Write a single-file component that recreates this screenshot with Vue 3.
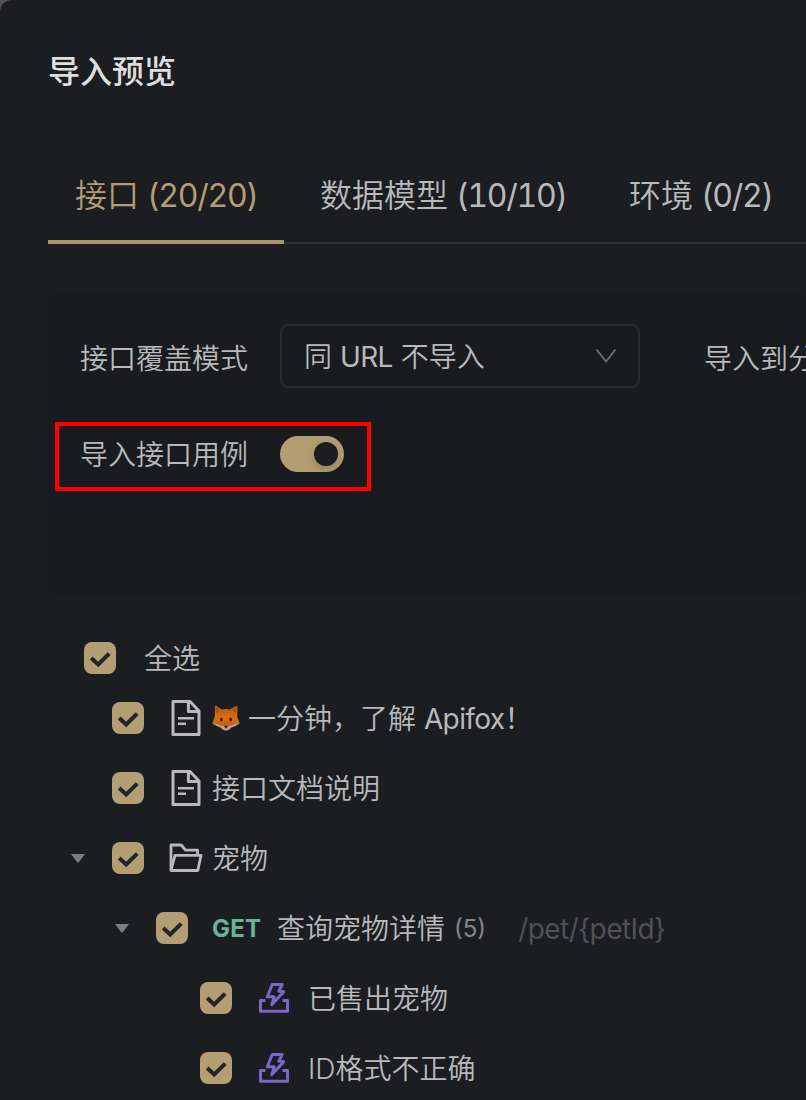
<script setup>
const tabs = [
  { name: '接口', count: '(20/20)', active: true, id: 'api' },
  { name: '数据模型', count: '(10/10)', id: 'model' },
  { name: '环境', count: '(0/2)', id: 'env' },
]
const rows = [
  { level: 1, icon: 'doc', fox: true, text: '一分钟，了解 ', latin: 'Apifox！' },
  { level: 1, icon: 'doc', text: '接口文档说明' },
  { level: 1, icon: 'folder', caret: true, text: '宠物' },
  { level: 2, method: 'GET', caret: true, text: '查询宠物详情', count: '(5)', path: '/pet/{petId}' },
  { level: 3, icon: 'case', text: '已售出宠物' },
  { level: 3, icon: 'case', text: 'ID格式不正确' },
]
</script>

<template>
  <div class="backdrop">
    <main class="modal">
      <h1 class="title">导入预览</h1>

      <nav class="tabs">
        <div v-for="t in tabs" :key="t.id" class="tab" :class="[t.id, { active: t.active }]">
          <span>{{ t.name }}</span><span class="tab-count">{{ t.count }}</span>
        </div>
      </nav>

      <section class="panel">
        <div class="field-row">
          <span class="label">接口覆盖模式</span>
          <div class="select">
            <span class="value">同 <span class="latin">URL</span> 不导入</span>
            <svg class="chevron" width="22" height="16" viewBox="0 0 22 16"><path d="M1.5 1.5 L11 13.5 L20.5 1.5" fill="none" stroke="#6c6d70" stroke-width="2" /></svg>
          </div>
          <span class="label group">导入到分</span>
        </div>
        <div class="highlight">
          <span class="label">导入接口用例</span>
          <div class="switch"><i class="knob"></i></div>
        </div>
      </section>

      <section class="tree">
        <div class="row all">
          <span class="check"><svg width="32" height="32" viewBox="0 0 32 32"><path d="M7.2 16 L14.2 22.4 L25.2 11.6" fill="none" stroke="#242529" stroke-width="4" /></svg></span>
          <span class="text">全选</span>
        </div>
        <div v-for="r in rows" :key="r.text" class="row" :class="'level' + r.level">
          <span class="caret"><svg v-if="r.caret" width="14" height="9" viewBox="0 0 14 9"><path d="M0 0 H14 L8 8 Q7 9 6 8 Z" fill="#7d7e80" /></svg></span>
          <span class="check"><svg width="32" height="32" viewBox="0 0 32 32"><path d="M7.2 16 L14.2 22.4 L25.2 11.6" fill="none" stroke="#242529" stroke-width="4" /></svg></span>

          <svg v-if="r.icon === 'doc'" class="icon doc" width="30" height="36" viewBox="0 0 30 36" fill="none" stroke="#b9b9bb">
            <path d="M2 1.5 H19 L28 11 V34.4 H2 Z M17.4 1.5 V11.5 H27.5" stroke-width="3" stroke-linejoin="round" />
            <path d="M7 18.2 H23 M7 23.7 H15" stroke-width="2.6" />
          </svg>
          <svg v-if="r.icon === 'folder'" class="icon folder" width="34" height="30" viewBox="0 0 34 30" fill="none" stroke="#b9b9bb" stroke-width="2.8" stroke-linejoin="round">
            <path d="M2 27.5 V2 H12.2 L16.5 7.2 H28.5 V12.4 M2 27.5 L6 12.4 H32 L28.8 27.5 Z" />
          </svg>
          <svg v-if="r.icon === 'case'" class="icon case" width="30" height="30" viewBox="0 0 30 30" fill="none" stroke="#7d66c9" stroke-width="3">
            <path d="M6.5 17.4 H1.5 V28.2 H28.5 V17.4 H23.5" stroke-linejoin="round" />
            <path d="M13.2 1.5 H23.3 L19.7 8.2 L24.8 8.7 L12.7 21.8 L15.2 13.8 H8.3 Z" stroke-width="2.9" stroke-linejoin="round" />
          </svg>

          <svg v-if="r.fox" class="fox" width="28" height="26" viewBox="0 0 28 26">
            <defs><linearGradient id="fur" x2="0" y2="1"><stop stop-color="#b95812" /><stop offset=".5" stop-color="#db6e0c" /><stop offset="1" stop-color="#b95412" /></linearGradient></defs>
            <path d="M2.8 1 Q4 0 6 2 L10 4.6 Q14 3.4 18 4.6 L22 2 Q25 0 25.5 2 L25.2 12 Q27 16 27.5 18.6 Q23 21.5 19.5 22.4 Q14 28.4 8.5 22.4 Q5 21.5 .5 18.6 Q1 15 3 11 Z" fill="url(#fur)" />
            <path d="M4 3 L7 5.5 L4.7 8 Z M24.2 3 L21 5.5 L23.5 8 Z" fill="#a04c12" />
            <path d="M.5 18.6 Q5 18 8.5 20.4 Q12 21.5 14 20 Q16 21.5 19.5 20.4 Q23 18 27.5 18.6 Q23 21.5 19.5 22.4 Q14 28.4 8.5 22.4 Q5 21.5 .5 18.6 Z" fill="#b7a08e" />
            <ellipse cx="9.3" cy="14.5" rx="1.3" ry="2.1" fill="#30170d" /><ellipse cx="18.7" cy="14.5" rx="1.3" ry="2.1" fill="#30170d" />
            <path d="M11.8 21 Q14 19.8 16.2 21 L14 23.4 Z" fill="#25211f" />
          </svg>
          <span v-if="r.method" class="method">{{ r.method }}</span>
          <span class="text">{{ r.text }}<span v-if="r.latin" class="latin">{{ r.latin }}</span></span>
          <span v-if="r.count" class="count">{{ r.count }}</span>
          <span v-if="r.path" class="path">{{ r.path }}</span>
        </div>
      </section>
    </main>
  </div>
</template>

<style>
html, body { overflow: hidden; background: #1c1d21; }
</style>

<style scoped>
* { box-sizing: border-box; }
.backdrop { width: 806px; height: 1100px; background: #55534d; overflow: hidden; }
.modal {
  height: 1100px; padding-left: 48px; background: #1c1d21; border-top-left-radius: 12px;
  font-family: Inter, "Noto Sans CJK SC", sans-serif; font-weight: 350; color: #b9b9bb; overflow: hidden; white-space: nowrap;
}
.title { margin: 0; padding-top: 48px; height: 148px; font-size: 32px; line-height: 48px; font-weight: 500; color: #dededf; }
.tabs { display: flex; height: 96px; border-bottom: 2px solid #303135; font-size: 32px; line-height: 95px; }
.tab { display: flex; gap: 8px; flex: none; height: 96px; padding: 0 28px 0 27px; width: 236px; }
.tab.model { width: 309px; padding-left: 36px; }
.tab.env { padding-left: 36px; }
.tab.active { color: #b39d72; border-bottom: 4px solid #a9946c; }
.tab-count { font-variant-numeric: tabular-nums; font-weight: 400; letter-spacing: -1.25px; }
.panel { margin-top: 48px; height: 304px; background: #1a1b1f; border-radius: 12px; padding-top: 32px; width: 758px; }
.field-row { display: flex; align-items: center; height: 64px; padding-left: 32px; }
.label { width: 200px; flex: none; font-size: 28px; line-height: 40px; padding-top: 6px; }
.select { width: 360px; height: 64px; flex: none; border: 2px solid #2a2b2f; border-radius: 8px; display: flex; align-items: center; justify-content: space-between; padding: 0 21px 0 22px; font-size: 28px; }
.value { padding-bottom: 2px; }
.latin { letter-spacing: -.6px; font-weight: 400; }
.group { margin-left: 64px; width: 120px; }
.highlight { margin: 34px 0 0 7px; width: 316px; height: 69px; border: 4px solid #ff0000; display: flex; align-items: center; padding-left: 21px; padding-bottom: 5px; }
.highlight .label { padding-top: 2px; }
.switch { width: 64px; height: 36px; border-radius: 18px; background: #b39d72; padding: 6px; display: flex; justify-content: flex-end; }
.knob { width: 24px; height: 24px; border-radius: 50%; background: #1c1d21; box-shadow: 0 4px 8px rgba(0, 35, 11, .2); }
.tree { padding-top: 37px; font-size: 28px; }
.row { display: flex; align-items: center; height: 70px; }
.row.all { height: 50px; padding-left: 36px; gap: 28px; }
.text { padding-bottom: 2px; white-space: pre; }
.check { width: 32px; height: 32px; flex: none; border-radius: 8px; background: #b39d72; display: flex; }
.caret { width: 41px; flex: none; display: flex; }
.level1 { padding-left: 23px; }
.level2 { padding-left: 67px; }
.level3 { padding-left: 111px; }
.icon { flex: none; }
.doc { margin: 0 11px 0 27px; }
.folder { margin: 0 9px 0 25px; }
.case { margin: 0 19px 0 27px; }
.fox { flex: none; margin-right: 8px; }
.method { margin-left: 24px; width: 65px; font-size: 24px; font-weight: 700; letter-spacing: .2px; color: #66b597; flex: none; }
.count { margin-left: 9px; font-size: 24px; color: #848587; font-weight: 400; }
.path { margin-left: 32px; padding-top: 2px; letter-spacing: -.55px; color: #505154; font-weight: 400; }
</style>
